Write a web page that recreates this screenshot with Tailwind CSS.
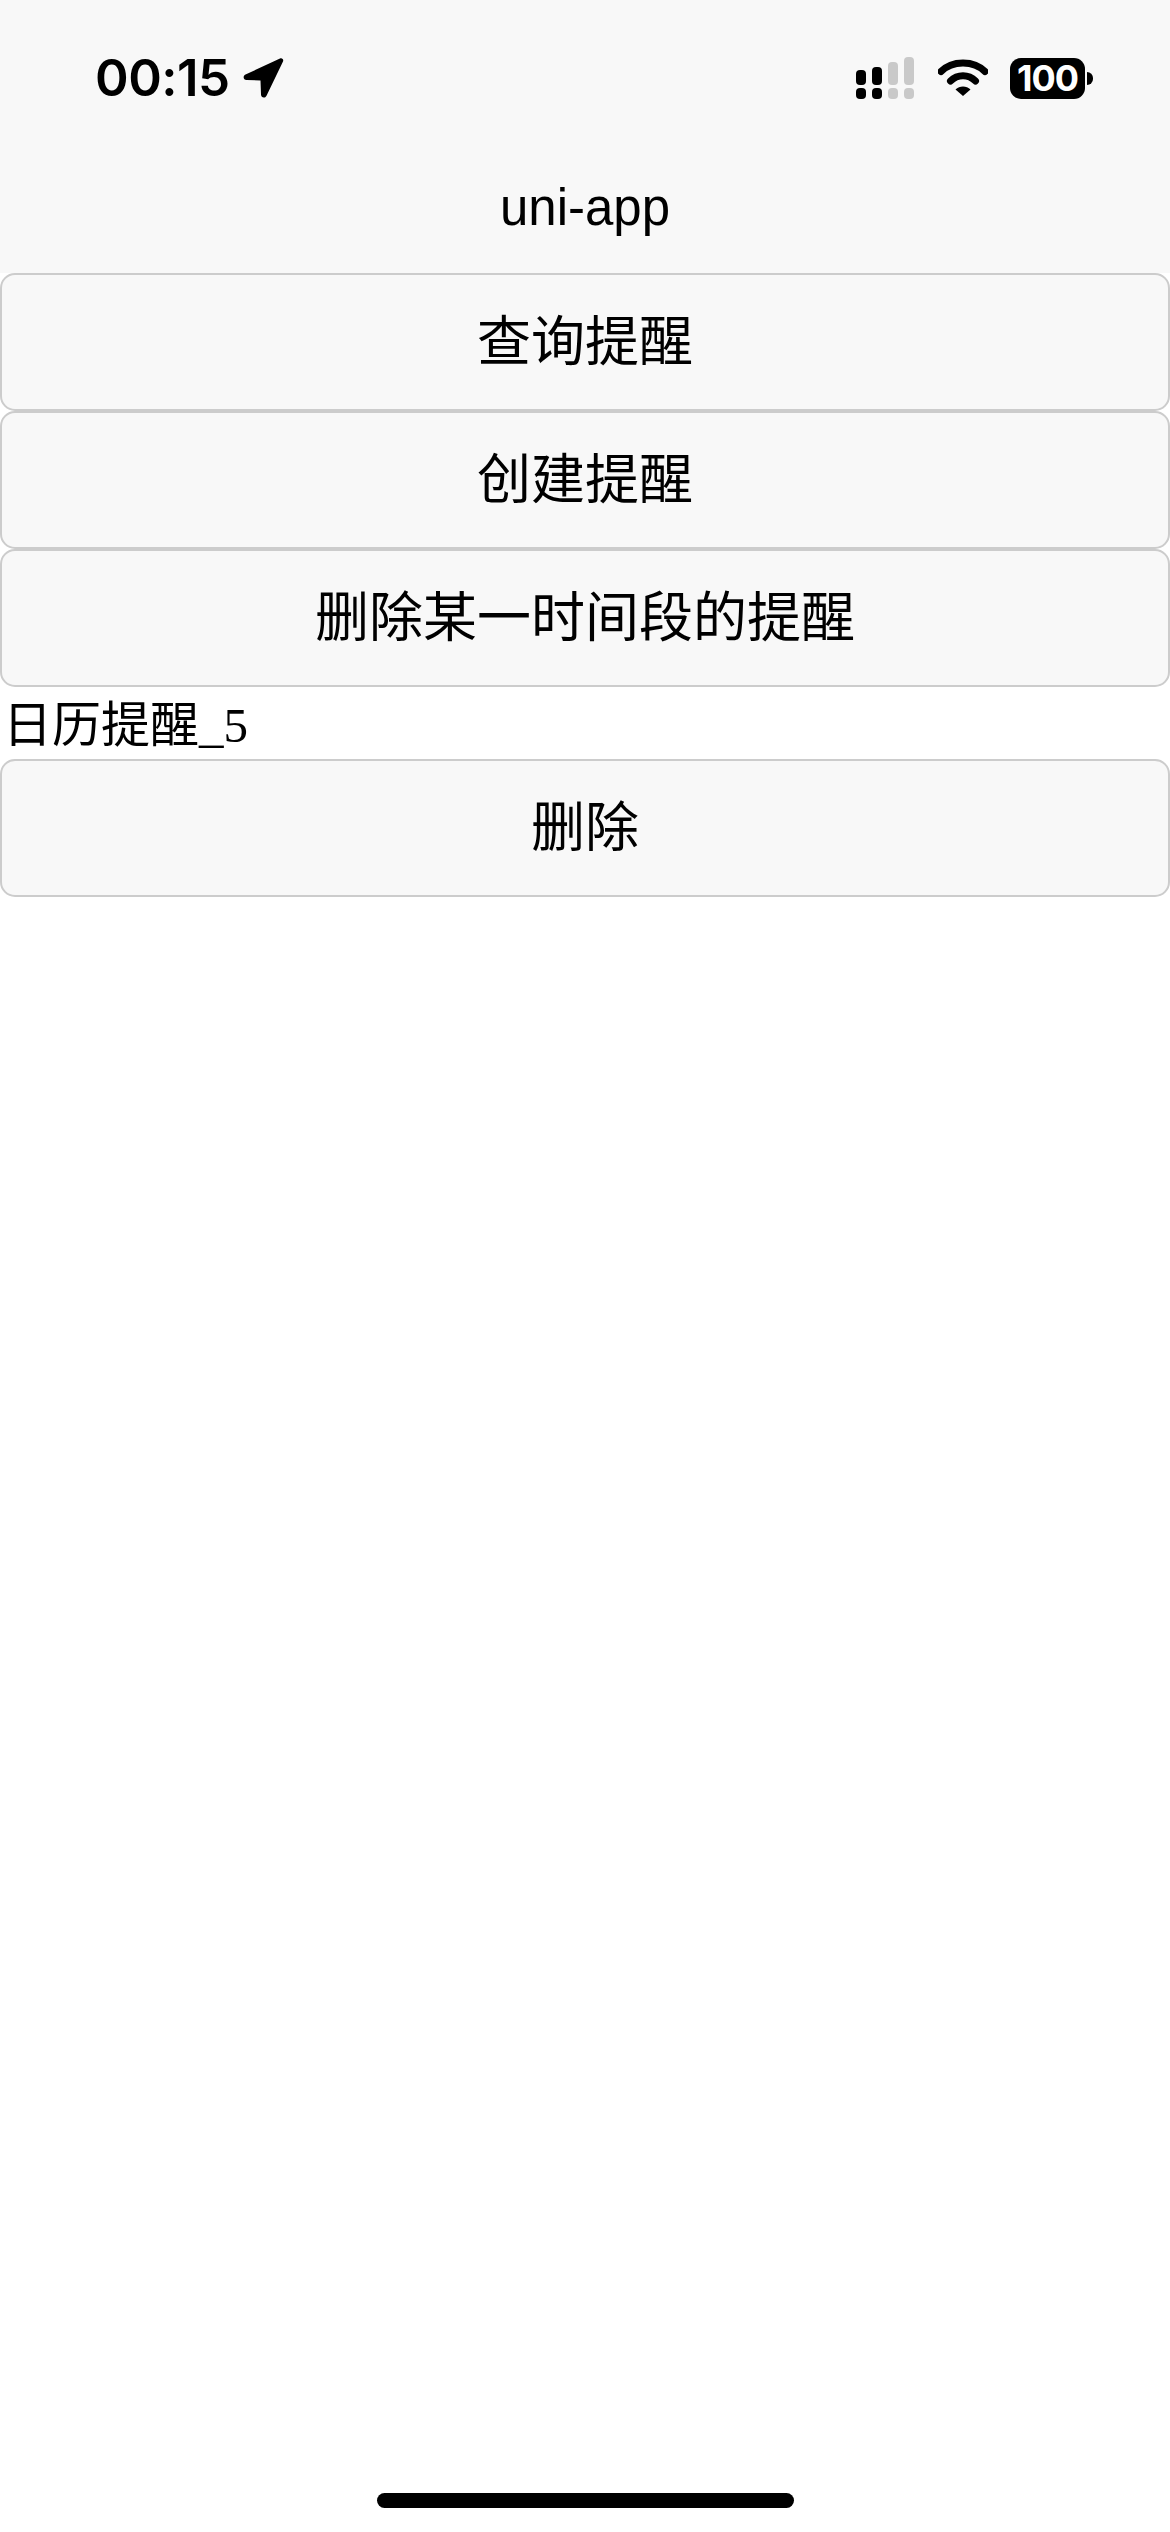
<!DOCTYPE html>
<html lang="zh-CN">
<head>
    <meta charset="UTF-8">
    <meta name="viewport" content="width=device-width, initial-scale=1.0">
    <title>uni-app</title>
    <script src="https://cdn.jsdelivr.net/npm/@tailwindcss/browser@4"></script>
</head>
<body class="bg-white text-black w-[1170px] h-[2532px] overflow-hidden relative font-['Liberation_Serif','Noto_Sans_CJK_SC',serif]">
    <!-- status bar + nav -->
    <header class="bg-[#f8f8f8] h-[273px] flex flex-col">
        <div class="h-[140px] flex items-start justify-between pl-[95px] pr-[77px] pt-[52px]">
            <div class="flex items-center gap-[12px]">
                <span class="font-['Inter',sans-serif] font-semibold text-[51px] leading-[52px] tracking-[-0.5px]">00:15</span>
                <svg class="w-[42px] h-[42px]" viewBox="0 0 42 42"><path d="M38 1.500 3.500 17.500c-3 1.500-2.200 5.500 1 5.500l14 .5.500 14c0 3.300 4 4.200 5.500 1.200L41 4.500c.9-2-1-3.900-3-3Z" fill="#000"/></svg>
            </div>
            <div class="flex items-center gap-[22px] pt-[5px]">
                <svg class="w-[60px] h-[42px]" viewBox="0 0 60 42">
                    <rect x="0" y="13" width="10" height="15" rx="4" fill="#000"/>
                    <rect x="16" y="10" width="10" height="18" rx="4" fill="#000"/>
                    <rect x="32" y="5" width="10" height="23" rx="4" fill="#c9c9c9"/>
                    <rect x="48" y="0" width="10" height="28" rx="4" fill="#c9c9c9"/>
                    <rect x="0" y="31" width="10" height="11" rx="4" fill="#000"/>
                    <rect x="16" y="31" width="10" height="11" rx="4" fill="#000"/>
                    <rect x="32" y="31" width="10" height="11" rx="4" fill="#c9c9c9"/>
                    <rect x="48" y="31" width="10" height="11" rx="4" fill="#c9c9c9"/>
                </svg>
                <svg class="w-[50px] h-[38px]" viewBox="0 0 50 38">
                    <path d="M3 12.500C14 1 36 1 47 12.500" fill="none" stroke="#000" stroke-width="7" stroke-linecap="round"/>
                    <path d="M12.500 22C19.500 15 30.500 15 37.500 22" fill="none" stroke="#000" stroke-width="7" stroke-linecap="round"/>
                    <path d="M25 37 17.500 30.500C21.500 26.500 28.500 26.500 32.500 30.500Z" fill="#000"/>
                </svg>
                <div class="flex items-center">
                    <div class="w-[75px] h-[41px] bg-black rounded-[11px] text-white font-['Inter',sans-serif] font-bold text-[36px] leading-[41px] text-center tracking-[-1px]">100</div>
                    <div class="w-[6px] h-[13px] bg-black rounded-r-full ml-[2px]"></div>
                </div>
            </div>
        </div>
        <div class="flex-1 flex items-center justify-center pt-[4px] font-['Liberation_Sans',sans-serif] text-[51px]">uni-app</div>
    </header>

    <main>
        <button class="block w-full h-[138px] bg-[#f8f8f8] border-[2px] border-[#cccccc] rounded-[15px] text-[54px] font-['Liberation_Sans','Noto_Sans_CJK_SC',sans-serif]">查询提醒</button>
        <button class="block w-full h-[138px] bg-[#f8f8f8] border-[2px] border-[#cccccc] rounded-[15px] text-[54px] font-['Liberation_Sans','Noto_Sans_CJK_SC',sans-serif]">创建提醒</button>
        <button class="block w-full h-[138px] bg-[#f8f8f8] border-[2px] border-[#cccccc] rounded-[15px] text-[54px] font-['Liberation_Sans','Noto_Sans_CJK_SC',sans-serif]">删除某一时间段的提醒</button>
        <div class="h-[72px] pl-[3px] pt-[3px] text-[49px] leading-[72px]">日历提醒_5</div>
        <button class="block w-full h-[138px] bg-[#f8f8f8] border-[2px] border-[#cccccc] rounded-[15px] text-[54px] font-['Liberation_Sans','Noto_Sans_CJK_SC',sans-serif]">删除</button>
    </main>

    <div class="absolute left-[377px] top-[2493px] w-[417px] h-[15px] bg-black rounded-full"></div>
</body>
</html>
